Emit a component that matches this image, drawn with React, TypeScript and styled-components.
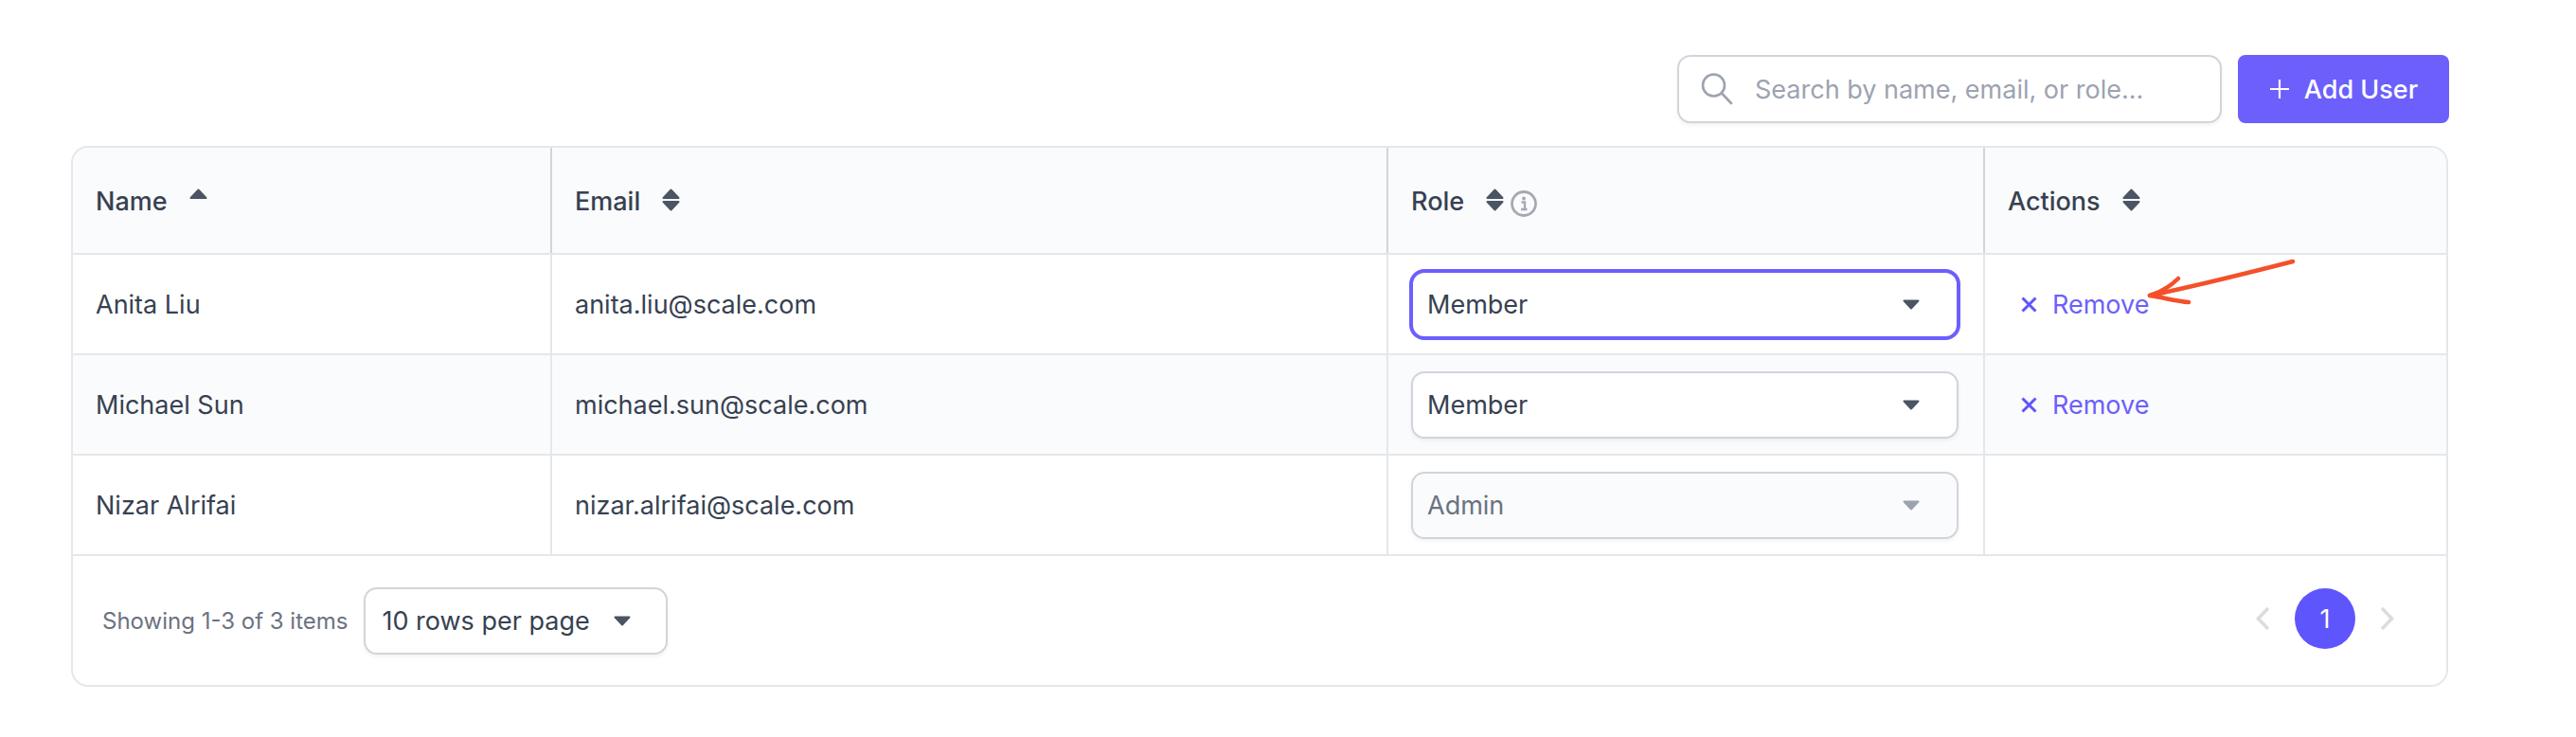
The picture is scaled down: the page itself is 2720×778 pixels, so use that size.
import React from 'react';
import styled, { createGlobalStyle } from 'styled-components';

const GlobalStyle = createGlobalStyle`
  html, body {
    margin: 0;
    padding: 0;
    background: #fff;
  }

  * {
    box-sizing: border-box;
  }
`;

const users = [
  { name: 'Anita Liu', email: 'anita.liu@scale.com', role: 'Member', focused: true, removable: true, pointed: true },
  { name: 'Michael Sun', email: 'michael.sun@scale.com', role: 'Member', removable: true },
  { name: 'Nizar Alrifai', email: 'nizar.alrifai@scale.com', role: 'Admin', disabled: true },
];

const SortIcon = ({ upOnly = false }: { upOnly?: boolean }) => (
  <SortSvg viewBox="0 0 19 24" fill="#4b5563" stroke="#4b5563" strokeWidth="2" strokeLinejoin="round">
    <path d="M9.5 1.5 L17.5 10 L1.5 10 Z" />
    {!upOnly && <path d="M1.5 14 L17.5 14 L9.5 22.5 Z" />}
  </SortSvg>
);

const InfoIcon = () => (
  <InfoSvg viewBox="0 0 28 28" fill="none">
    <circle cx="14" cy="14" r="12.5" stroke="#a5a9b3" strokeWidth="2.8" />
    <circle cx="14" cy="8.5" r="1.9" fill="#a5a9b3" />
    <path d="M11.5 12.5 H15 V19.5 M11 20 H17.5" stroke="#a5a9b3" strokeWidth="2.4" />
  </InfoSvg>
);

const Caret = ({ muted = false }: { muted?: boolean }) => (
  <CaretSvg viewBox="0 0 18 11" fill={muted ? '#9ca3af' : '#4b5563'} stroke={muted ? '#9ca3af' : '#4b5563'} strokeWidth="2" strokeLinejoin="round">
    <path d="M1.5 1.5 L16.5 1.5 L9 9.5 Z" />
  </CaretSvg>
);

const App = () => {
  return (
    <>
      <GlobalStyle />
      <Page>
        <Toolbar>
          <SearchBox>
            <svg width="36" height="34" viewBox="0 0 36 34" fill="none" stroke="#9ca3af" strokeWidth="2.6" strokeLinecap="round">
              <circle cx="14.5" cy="13" r="11.5" />
              <path d="M23 21.5 L33 32" />
            </svg>
            <SearchInput placeholder="Search by name, email, or role..." />
          </SearchBox>
          <AddButton>
            <svg width="22" height="22" viewBox="0 0 22 22" stroke="#fff" strokeWidth="2.2">
              <path d="M11 1 V21 M1 11 H21" />
            </svg>
            Add User
          </AddButton>
        </Toolbar>

        <Table>
          <HeaderRow>
            <HeaderCell>
              Name
              <SortIcon upOnly />
            </HeaderCell>
            <HeaderCell>
              Email
              <SortIcon />
            </HeaderCell>
            <HeaderCell>
              Role
              <SortIcon />
              <InfoIcon />
            </HeaderCell>
            <HeaderCell>
              Actions
              <SortIcon />
            </HeaderCell>
          </HeaderRow>

          {users.map((user, i) => (
            <BodyRow key={user.email} $striped={i % 2 === 1}>
              <BodyCell>{user.name}</BodyCell>
              <BodyCell>{user.email}</BodyCell>
              <BodyCell>
                <RoleSelect $focused={user.focused} $disabled={user.disabled}>
                  {user.role}
                  <Caret muted={user.disabled} />
                </RoleSelect>
              </BodyCell>
              <ActionCell>
                {user.removable && (
                  <RemoveButton>
                    <svg width="17" height="17" viewBox="0 0 17 17" stroke="#5f55fd" strokeWidth="3">
                      <path d="M1.5 1.5 L15.5 15.5 M15.5 1.5 L1.5 15.5" />
                    </svg>
                    Remove
                  </RemoveButton>
                )}
                {user.pointed && (
                  <Arrow viewBox="0 0 164 54" fill="none" stroke="#f4502a" strokeWidth="4.5" strokeLinecap="round" strokeLinejoin="round">
                    <path d="M159 5 C 120 15, 60 30, 8 41" />
                    <path d="M38 23 C 30 31, 20 37, 8 41 C 22 43, 36 47, 49 48" />
                  </Arrow>
                )}
              </ActionCell>
            </BodyRow>
          ))}

          <Footer>
            <FooterLeft>
              <ItemCount>Showing 1-3 of 3 items</ItemCount>
              <PageSizeSelect>
                10 rows per page
                <Caret />
              </PageSizeSelect>
            </FooterLeft>
            <Pagination>
              <Chevron viewBox="0 0 14 24" fill="none" stroke="#dcdcdc" strokeWidth="3.6">
                <path d="M13 1 L2.5 12 L13 23" />
              </Chevron>
              <PageBubble>1</PageBubble>
              <Chevron viewBox="0 0 14 24" fill="none" stroke="#dcdcdc" strokeWidth="3.6">
                <path d="M1 1 L11.5 12 L1 23" />
              </Chevron>
            </Pagination>
          </Footer>
        </Table>
      </Page>
    </>
  );
};

const Page = styled.div`
  width: 2720px;
  height: 778px;
  padding: 58px 134px 0 75px;
  font-family: Inter, "Liberation Sans", sans-serif;
  color: #374151;
  overflow: hidden;
`;

const Toolbar = styled.div`
  display: flex;
  justify-content: flex-end;
  gap: 17px;
  height: 72px;
  margin-bottom: 24px;
`;

const SearchBox = styled.div`
  width: 575px;
  display: flex;
  align-items: center;
  gap: 22px;
  padding: 0 22px;
  background: #fff;
  border: 2px solid #d1d5db;
  border-radius: 14px;
  box-shadow: 0 2px 4px rgba(0, 0, 0, 0.06);
`;

const SearchInput = styled.input`
  flex: 1;
  min-width: 0;
  border: 0;
  outline: 0;
  padding: 0;
  background: transparent;
  font: 400 27px Inter, "Liberation Sans", sans-serif;

  &::placeholder {
    color: #9ca3af;
    opacity: 1;
  }
`;

const AddButton = styled.button`
  width: 223px;
  display: flex;
  align-items: center;
  justify-content: center;
  gap: 15px;
  border: 0;
  border-radius: 8px;
  background: #6c5ffc;
  color: #fff;
  font: 500 27px Inter, "Liberation Sans", sans-serif;
`;

const Table = styled.div`
  width: 2510px;
  border: 2px solid #e5e7eb;
  border-radius: 18px;
  overflow: hidden;
`;

const HeaderRow = styled.div`
  display: grid;
  grid-template-columns: 506px 883px 630px 1fr;
  height: 113px;
  background: #fafbfc;
  border-bottom: 2px solid #e5e7eb;
`;

const HeaderCell = styled.div`
  display: flex;
  align-items: center;
  gap: 23px;
  padding: 2px 24px 0;
  border-right: 2px solid #d1d5db;
  font-size: 27px;
  font-weight: 500;
  color: #374151;

  &:last-child {
    border-right: 0;
  }
`;

const SortSvg = styled.svg`
  width: 19px;
  height: 24px;
  flex: none;
  margin-top: -3px;
`;

const InfoSvg = styled.svg`
  width: 28px;
  height: 28px;
  flex: none;
  margin: 4px 0 0 -16px;
`;

const BodyRow = styled.div<{ $striped?: boolean }>`
  display: grid;
  grid-template-columns: 506px 883px 630px 1fr;
  height: 106px;
  background: ${props => (props.$striped ? '#fafbfc' : '#fff')};
  border-bottom: 2px solid #e5e7eb;
`;

const BodyCell = styled.div`
  display: flex;
  align-items: center;
  padding: 0 24px;
  border-right: 2px solid #e5e7eb;
  font-size: 27px;
  color: #374151;
`;

const ActionCell = styled(BodyCell)`
  position: relative;
  border-right: 0;
`;

const RoleSelect = styled.div<{ $focused?: boolean; $disabled?: boolean }>`
  width: 578px;
  height: 71px;
  display: flex;
  align-items: center;
  justify-content: space-between;
  padding: 0 39px 0 15px;
  border: 2px solid ${props => (props.$focused ? '#6c5ffc' : '#d1d5db')};
  border-radius: 14px;
  background: ${props => (props.$disabled ? '#fafbfc' : '#fff')};
  color: ${props => (props.$disabled ? '#6b7280' : '#374151')};
  box-shadow: ${props => (props.$focused ? '0 0 0 2px #6c5ffc' : '0 2px 4px rgba(0, 0, 0, 0.06)')};
`;

const CaretSvg = styled.svg`
  width: 18px;
  height: 11px;
  flex: none;
`;

const RemoveButton = styled.button`
  display: flex;
  align-items: center;
  gap: 16px;
  margin-left: 14px;
  padding: 0;
  border: 0;
  background: transparent;
  color: #6c5ffc;
  font: 400 27px Inter, "Liberation Sans", sans-serif;
`;

const Arrow = styled.svg`
  position: absolute;
  left: 166px;
  top: 2px;
  width: 164px;
  height: 54px;
`;

const Footer = styled.div`
  display: flex;
  align-items: center;
  justify-content: space-between;
  height: 136px;
  padding: 0 55px 0 31px;
`;

const FooterLeft = styled.div`
  display: flex;
  align-items: center;
  gap: 17px;
`;

const ItemCount = styled.span`
  font-size: 24px;
  color: #6b7280;
`;

const PageSizeSelect = styled.div`
  width: 321px;
  height: 71px;
  display: flex;
  align-items: center;
  justify-content: space-between;
  padding: 0 37px 0 17px;
  border: 2px solid #d1d5db;
  border-radius: 14px;
  background: #fff;
  font-size: 27px;
  color: #374151;
  box-shadow: 0 2px 4px rgba(0, 0, 0, 0.06);
`;

const Pagination = styled.div`
  display: flex;
  align-items: center;
  gap: 27px;
  padding-bottom: 4px;
`;

const Chevron = styled.svg`
  width: 14px;
  height: 24px;
`;

const PageBubble = styled.div`
  width: 64px;
  height: 64px;
  display: flex;
  align-items: center;
  justify-content: center;
  border-radius: 50%;
  background: #5f55fd;
  color: #fff;
  font-size: 27px;
`;

export default App;
